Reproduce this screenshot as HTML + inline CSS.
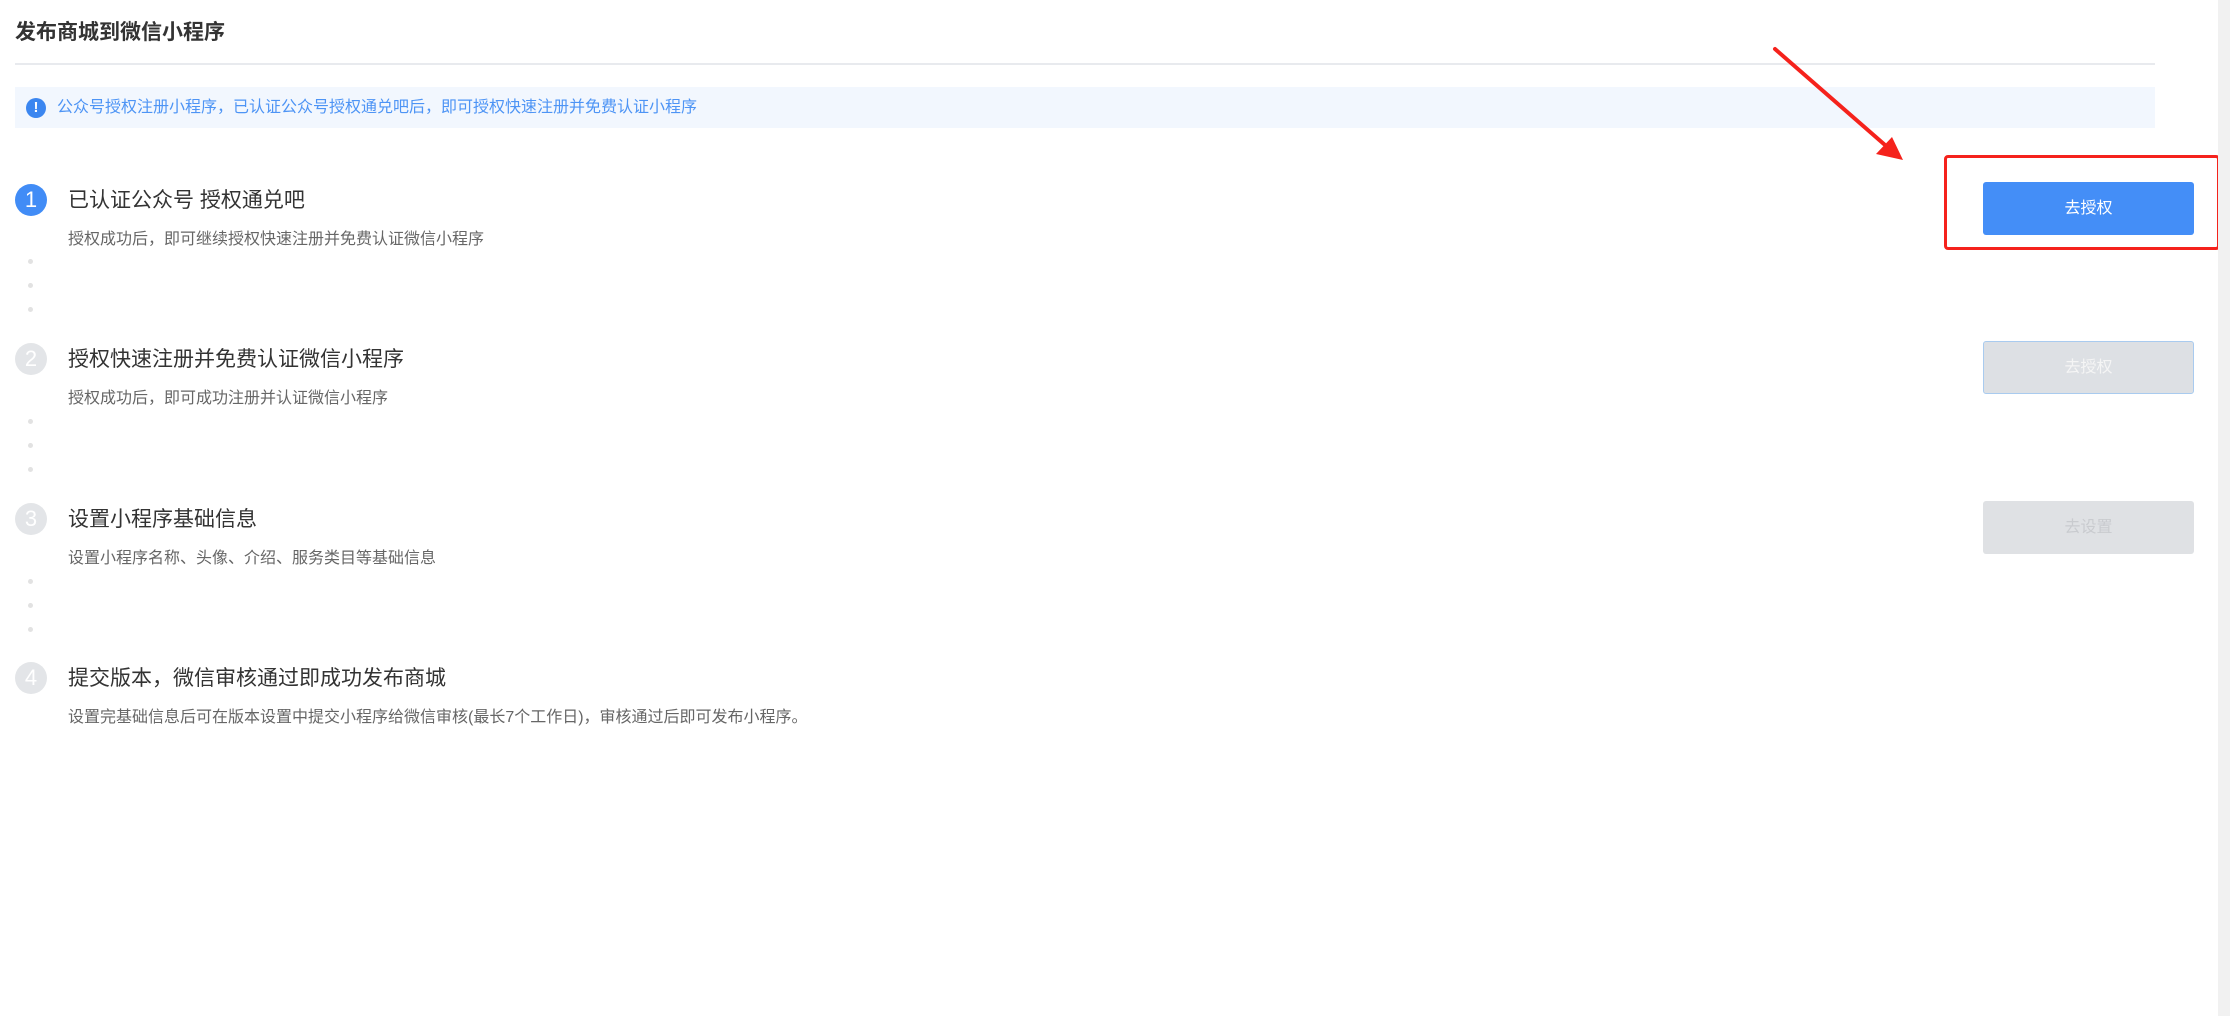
<!DOCTYPE html>
<html><head><meta charset="utf-8"><style>
*{margin:0;padding:0;box-sizing:border-box}
body{width:2230px;height:1016px;background:#fff;position:relative;overflow:hidden;font-family:"Liberation Sans","Noto Sans CJK SC",sans-serif}
.abs{position:absolute}
.title{left:15px;top:18px;font-size:21px;font-weight:bold;color:#333;line-height:30px}
.div{left:15px;top:63px;width:2140px;height:2px;background:#e8eaee}
.info{left:15px;top:87px;width:2140px;height:41px;background:#f2f7fe}
.info .ic{position:absolute;left:11px;top:11px;width:20px;height:20px;border-radius:50%;background:#3b86f0;color:#fff;font-size:15px;font-weight:bold;text-align:center;line-height:20px}
.info .tx{position:absolute;left:42px;top:0;line-height:41px;font-size:16px;color:#4d94f5}
.circ{width:32px;height:32px;border-radius:50%;background:#e3e5e8;color:#fff;font-size:22px;text-align:center;line-height:32px;left:15px}
.circ.on{background:#418cf6}
.st{left:68px;font-size:21px;color:#333;line-height:30px}
.sub{left:68px;font-size:16px;color:#666;line-height:22px}
.dot{left:28px;width:5px;height:5px;border-radius:50%;background:#e2e2e2}
.btn{left:1983px;width:211px;height:53px;border-radius:3px;text-align:center;line-height:53px;font-size:16px}
.b1{background:#448ef7;color:#fff}
.b2{background:#dde0e4;border:1px solid #a9cbef;color:#f5f5f5;line-height:51px}
.b3{background:#dfe1e4;color:#c9cbcf}
.red{left:1944px;top:155px;width:276px;height:95px;border:3px solid #f5221c;border-radius:4px}
.scroll{left:2218px;top:0;width:12px;height:1016px;background:#f1f1f1}
</style></head><body>
<div class="abs title">发布商城到微信小程序</div>
<div class="abs div"></div>
<div class="abs info"><div class="ic">!</div><div class="tx">公众号授权注册小程序，已认证公众号授权通兑吧后，即可授权快速注册并免费认证小程序</div></div>

<div class="abs circ on" style="top:184px">1</div>
<div class="abs st" style="top:186px">已认证公众号 授权通兑吧</div>
<div class="abs sub" style="top:229px">授权成功后，即可继续授权快速注册并免费认证微信小程序</div>
<div class="abs dot" style="top:259px"></div><div class="abs dot" style="top:283px"></div><div class="abs dot" style="top:307px"></div>

<div class="abs circ" style="top:343px">2</div>
<div class="abs st" style="top:345px">授权快速注册并免费认证微信小程序</div>
<div class="abs sub" style="top:388px">授权成功后，即可成功注册并认证微信小程序</div>
<div class="abs dot" style="top:419px"></div><div class="abs dot" style="top:443px"></div><div class="abs dot" style="top:467px"></div>

<div class="abs circ" style="top:503px">3</div>
<div class="abs st" style="top:505px">设置小程序基础信息</div>
<div class="abs sub" style="top:548px">设置小程序名称、头像、介绍、服务类目等基础信息</div>
<div class="abs dot" style="top:579px"></div><div class="abs dot" style="top:603px"></div><div class="abs dot" style="top:627px"></div>

<div class="abs circ" style="top:662px">4</div>
<div class="abs st" style="top:664px">提交版本，微信审核通过即成功发布商城</div>
<div class="abs sub" style="top:707px">设置完基础信息后可在版本设置中提交小程序给微信审核(最长7个工作日)，审核通过后即可发布小程序。</div>

<div class="abs btn b1" style="top:182px">去授权</div>
<div class="abs btn b2" style="top:341px">去授权</div>
<div class="abs btn b3" style="top:501px">去设置</div>
<div class="abs red"></div>

<svg class="abs" style="left:0;top:0" width="2230" height="300">
<line x1="1775" y1="49" x2="1885" y2="145" stroke="#f5221c" stroke-width="4" stroke-linecap="round"/>
<polygon points="1903,160 1892,137 1876,154" fill="#f5221c"/>
</svg>
<div class="abs scroll"></div>
</body></html>
